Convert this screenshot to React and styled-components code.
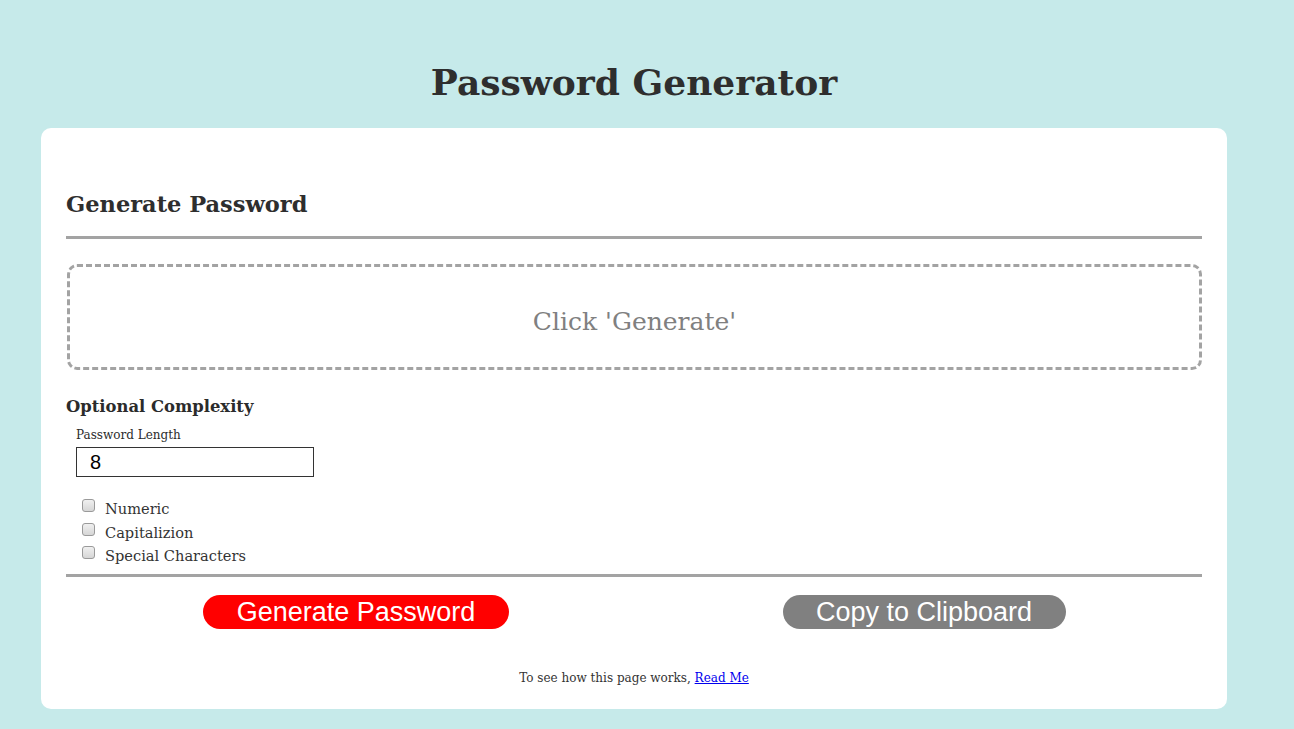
import React from "react";
import styled, { createGlobalStyle } from "styled-components";

const Global = createGlobalStyle`
  html, body {
    margin: 0;
    padding: 0;
    background-color: #c6eaea;
  }
  body {
    font-family: "DejaVu Serif", "Liberation Serif", serif;
    color: #2b2b2b;
  }
`;

const Wrapper = styled.div`
  width: 1186px;
  padding: 0 0 19px 41px;
`;

const Title = styled.h1`
  margin: 0 0 20px 0;
  padding-top: 56px;
  text-align: center;
  font-size: 36px;
  font-weight: bold;
  line-height: 52px;
  color: #2e2e2e;
`;

const Card = styled.div`
  background-color: #fff;
  border-radius: 10px;
  padding: 56px 25px 22px 25px;
`;

const CardTitle = styled.h2`
  margin: 0;
  font-size: 22.5px;
  font-weight: bold;
  line-height: 40px;
  color: #2e2e2e;
`;

const Rule = styled.hr`
  border: none;
  height: 3px;
  background-color: #a3a3a3;
  margin: ${(p) => p.$margin || "12px 0 0 0"};
`;

const Output = styled.div`
  margin: 25px 0 0 1px;
  height: 91px;
  padding-top: 9px;
  border: 3px dashed #a3a3a3;
  border-radius: 10px;
  display: flex;
  align-items: center;
  justify-content: center;
  font-size: 25px;
  color: #808080;
`;

const Section = styled.div`
  margin-top: 25px;
`;

const SectionTitle = styled.div`
  font-size: 16.4px;
  font-weight: bold;
  line-height: 24px;
`;

const Field = styled.div`
  padding-left: 10px;
  margin-top: 8px;
`;

const FieldLabel = styled.label`
  display: block;
  font-size: 12px;
  line-height: 16px;
`;

const Input = styled.input`
  display: block;
  box-sizing: border-box;
  width: 238px;
  height: 30px;
  margin-top: 4px;
  border: 1px solid #333;
  padding: 0 13px;
  font-family: "Liberation Sans", Arial, sans-serif;
  font-size: 20px;
  color: #000;
  outline: none;
`;

const Checks = styled.div`
  margin-top: 20px;
  padding-left: 16px;
`;

const CheckRow = styled.label`
  display: flex;
  align-items: center;
  height: 23.5px;
  font-size: 14.6px;
  color: #333;
`;

const Box = styled.span`
  width: 11px;
  height: 11px;
  border: 1px solid #9a9a9a;
  border-radius: 3px;
  background: linear-gradient(#f0f0f0, #d6d6d6);
  margin: -6px 10px 0 0;
`;

const Buttons = styled.div`
  display: grid;
  grid-template-columns: 1fr 1fr;
  margin-top: 18px;
`;

const Cell = styled.div`
  display: flex;
  justify-content: center;
  padding-left: 12px;
`;

const Button = styled.button`
  height: 34px;
  width: ${(p) => p.$width};
  border: none;
  border-radius: 17px;
  background-color: ${(p) => p.$bg};
  color: #fff;
  font-family: "Liberation Sans", Arial, sans-serif;
  font-size: 27px;
  line-height: 34px;
  padding: 0;
  cursor: pointer;
`;

const Footer = styled.p`
  margin: 40px 0 0 0;
  text-align: center;
  font-size: 12px;
  line-height: 18px;
  color: #333;

  a {
    color: #0000ee;
  }
`;

const options = ["Numeric", "Capitalizion", "Special Characters"];

export default function App() {
  return (
    <>
      <Global />
      <Wrapper>
        <Title>Password Generator</Title>
        <Card>
          <CardTitle>Generate Password</CardTitle>
          <Rule />
          <Output>Click 'Generate'</Output>
          <Section>
            <SectionTitle>Optional Complexity</SectionTitle>
            <Field>
              <FieldLabel>Password Length</FieldLabel>
              <Input defaultValue="8" />
            </Field>
            <Checks>
              {options.map((o) => (
                <CheckRow key={o}>
                  <Box />
                  {o}
                </CheckRow>
              ))}
            </Checks>
          </Section>
          <Rule $margin="6px 0 0 0" />
          <Buttons>
            <Cell>
              <Button $bg="#ff0000" $width="306px">Generate Password</Button>
            </Cell>
            <Cell>
              <Button $bg="#808080" $width="283px">Copy to Clipboard</Button>
            </Cell>
          </Buttons>
          <Footer>
            To see how this page works, <a href="#readme">Read Me</a>
          </Footer>
        </Card>
      </Wrapper>
    </>
  );
}
